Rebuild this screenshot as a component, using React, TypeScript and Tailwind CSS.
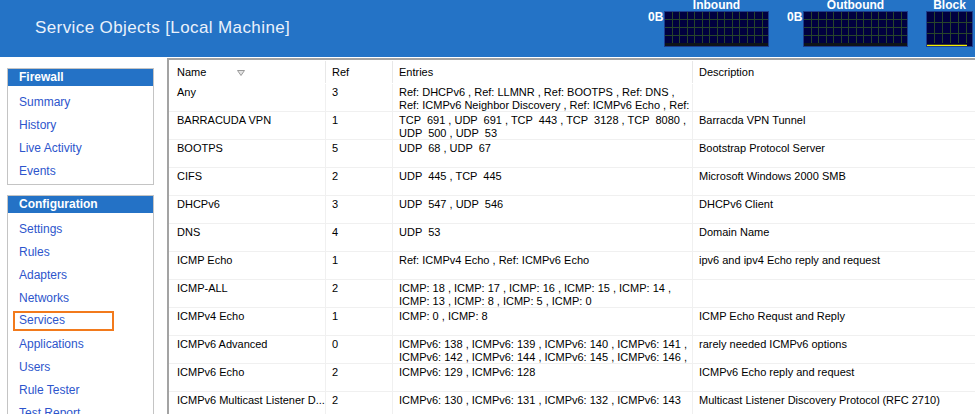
import React from "react";

type Row = {
  name: string;
  ref: number;
  entries: string[];
  description: string;
};

const rows: Row[] = [
  {
    name: "Any",
    ref: 3,
    entries: [
      "Ref: DHCPv6 , Ref: LLMNR , Ref: BOOTPS , Ref: DNS ,",
      "Ref: ICMPv6 Neighbor Discovery , Ref: ICMPv6 Echo , Ref:",
    ],
    description: "",
  },
  {
    name: "BARRACUDA VPN",
    ref: 1,
    entries: ["TCP  691 , UDP  691 , TCP  443 , TCP  3128 , TCP  8080 ,", "UDP  500 , UDP  53"],
    description: "Barracda VPN Tunnel",
  },
  { name: "BOOTPS", ref: 5, entries: ["UDP  68 , UDP  67"], description: "Bootstrap Protocol Server" },
  { name: "CIFS", ref: 2, entries: ["UDP  445 , TCP  445"], description: "Microsoft Windows 2000 SMB" },
  { name: "DHCPv6", ref: 3, entries: ["UDP  547 , UDP  546"], description: "DHCPv6 Client" },
  { name: "DNS", ref: 4, entries: ["UDP  53"], description: "Domain Name" },
  {
    name: "ICMP Echo",
    ref: 1,
    entries: ["Ref: ICMPv4 Echo , Ref: ICMPv6 Echo"],
    description: "ipv6 and ipv4 Echo reply and request",
  },
  {
    name: "ICMP-ALL",
    ref: 2,
    entries: ["ICMP: 18 , ICMP: 17 , ICMP: 16 , ICMP: 15 , ICMP: 14 ,", "ICMP: 13 , ICMP: 8 , ICMP: 5 , ICMP: 0"],
    description: "",
  },
  { name: "ICMPv4 Echo", ref: 1, entries: ["ICMP: 0 , ICMP: 8"], description: "ICMP Echo Requst and Reply" },
  {
    name: "ICMPv6 Advanced",
    ref: 0,
    entries: [
      "ICMPv6: 138 , ICMPv6: 139 , ICMPv6: 140 , ICMPv6: 141 ,",
      "ICMPv6: 142 , ICMPv6: 144 , ICMPv6: 145 , ICMPv6: 146 ,",
    ],
    description: "rarely needed ICMPv6 options",
  },
  { name: "ICMPv6 Echo", ref: 2, entries: ["ICMPv6: 129 , ICMPv6: 128"], description: "ICMPv6 Echo reply and request" },
  {
    name: "ICMPv6 Multicast Listener D...",
    ref: 2,
    entries: ["ICMPv6: 130 , ICMPv6: 131 , ICMPv6: 132 , ICMPv6: 143"],
    description: "Multicast Listener Discovery Protocol (RFC 2710)",
  },
];

const firewallLinks = ["Summary", "History", "Live Activity", "Events"];
const configLinks = ["Settings", "Rules", "Adapters", "Networks", "Services", "Applications", "Users", "Rule Tester", "Test Report"];

// little traffic graph in the header
function TrafficGraph({ width, step, hLines, block }: { width: number; step: number; hLines: number[]; block?: boolean }) {
  const h = 36;
  const vLines: number[] = [];
  for (let x = step; x < width - 1; x += step) vLines.push(Math.round(x) + 0.5);
  return (
    <svg width={width} height={h} viewBox={`0 0 ${width} ${h}`} className="block">
      <rect x="0" y="0" width={width} height={h} fill="#00003f" />
      {vLines.map((x) => (
        <line key={x} x1={x} y1={1} x2={x} y2={h - 4} stroke="#27452a" strokeWidth="1" />
      ))}
      {hLines.map((y) => (
        <line key={y} x1={1} y1={y + 0.5} x2={width - 1} y2={y + 0.5} stroke="#27452a" strokeWidth="1" />
      ))}
      {block ? (
        <line x1={1} y1={h - 1.5} x2={width - 6} y2={h - 1.5} stroke="#f5f000" strokeWidth="1.5" />
      ) : (
        <rect x="1" y={h - 4} width={width - 2} height="3" fill="#101418" />
      )}
      <rect x="0.5" y="0.5" width={width - 1} height={h - 1} fill="none" stroke="#1d3d8c" strokeWidth="1" />
    </svg>
  );
}

function GraphGroup({ title, label, children }: { title: string; label?: string; children: React.ReactNode }) {
  return (
    <div className="flex items-start">
      {label && <div className="mt-[11px] mr-[1px] w-[15px] text-right text-[12px] leading-[12px] font-bold text-white">{label}</div>}
      <div className="flex flex-col items-center">
        <div className="h-[11px] text-[12px] leading-[10px] font-bold text-white">{title}</div>
        {children}
      </div>
    </div>
  );
}

function SidePanel({ title, links, active }: { title: string; links: string[]; active?: string }) {
  return (
    <div className="w-[147px] border border-[#c4c4c4] bg-white">
      <div className="h-[17px] bg-[#2472c6] pl-[11px] text-[12px] leading-[17px] font-bold text-white">{title}</div>
      <div className="py-[3px]">
        {links.map((l) =>
          l === active ? (
            <div key={l} className="ml-[5px] mt-[3px] h-[20px] w-[101px] border-2 border-[#f27a1c] pl-[4px] text-[12px] leading-[15px] text-[#2d55cc]">
              {l}
            </div>
          ) : (
            <div key={l} className="h-[23px] pl-[11px] pt-[6px] text-[12px] leading-[15px] text-[#2d55cc]">
              {l}
            </div>
          )
        )}
      </div>
    </div>
  );
}

export default function App() {
  return (
    <div className="relative h-[414px] w-[975px] overflow-hidden bg-white font-['Liberation_Sans',Arial,sans-serif]">
      {/* top bar */}
      <div className="flex h-[57px] bg-[#2473c6]">
        <div className="self-center pl-[35px] pb-[1px] text-[17px] tracking-[0.4px] text-[#eaf1fb]">Service Objects [Local Machine]</div>
        <div className="ml-auto mr-[2px] flex items-start gap-[18px]">
          <GraphGroup title="Inbound" label="0B">
            <TrafficGraph width={105} step={7.5} hLines={[8, 16, 24]} />
          </GraphGroup>
          <GraphGroup title="Outbound" label="0B">
            <TrafficGraph width={105} step={7.5} hLines={[8, 16, 24]} />
          </GraphGroup>
          <GraphGroup title="Block">
            <TrafficGraph width={47} step={8} hLines={[11, 22]} block />
          </GraphGroup>
        </div>
      </div>

      <div className="mt-[1px] flex">
        {/* left nav */}
        <div className="flex w-[167px] shrink-0 flex-col gap-[10px] pl-[7px] pt-[10px]">
          <SidePanel title="Firewall" links={firewallLinks} />
          <SidePanel title="Configuration" links={configLinks} active="Services" />
        </div>

        {/* services table */}
        <div className="flex-1 border-l-2 border-t-2 border-[#a3a3a3] text-[11px] text-black">
          <div className="grid h-[24px] grid-cols-[157px_67px_300px_1fr] items-center">
            <div className="flex h-[22px] items-center border-r border-[#e8e8e8] pl-[8px] pt-[1px]">
              Name
              <svg width="8" height="6" viewBox="0 0 8 6" className="ml-[31px]">
                <path d="M0.5 0.5 H7.5 L4 5.5 Z" fill="#e4e4e4" stroke="#9a9a9a" strokeWidth="1" />
              </svg>
            </div>
            <div className="flex h-[22px] items-center border-r border-[#e8e8e8] pl-[6px] pt-[1px]">Ref</div>
            <div className="flex h-[22px] items-center border-r border-[#e8e8e8] pl-[6px] pt-[1px]">Entries</div>
            <div className="pl-[6px] pt-[1px]">Description</div>
          </div>
          {rows.map((r) => (
            <div key={r.name} className="grid h-[28px] grid-cols-[157px_67px_300px_1fr] border-b border-[#f0f0f0] leading-[13px]">
              <div className="overflow-hidden whitespace-nowrap border-r border-[#f0f0f0] pl-[8px] pt-[2px]">{r.name}</div>
              <div className="border-r border-[#f0f0f0] pl-[6px] pt-[2px]">{r.ref}</div>
              <div className="overflow-hidden whitespace-pre border-r border-[#f0f0f0] pl-[6px] pt-[2px]">
                {r.entries.map((e, i) => (
                  <div key={i}>{e}</div>
                ))}
              </div>
              <div className="whitespace-nowrap pl-[6px] pt-[2px]">{r.description}</div>
            </div>
          ))}
        </div>
      </div>
    </div>
  );
}
